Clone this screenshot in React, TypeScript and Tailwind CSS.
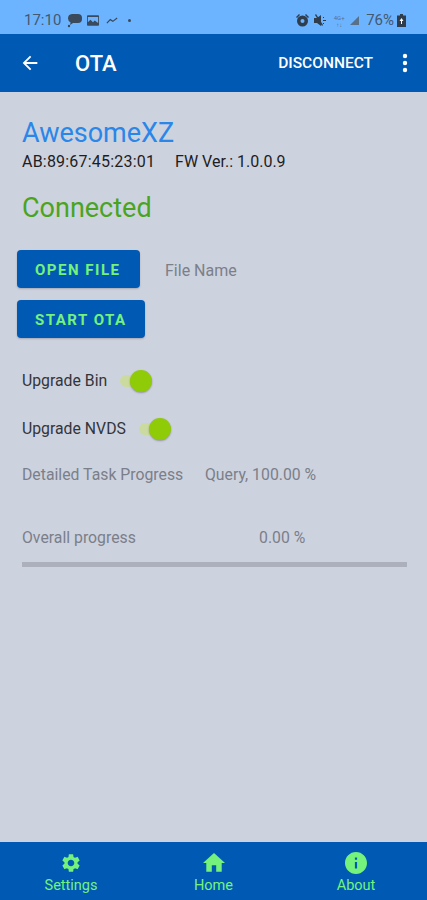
import React from 'react';

const font = 'font-[Roboto,sans-serif]';

function Toggle() {
  return (
    <div className="relative h-[12px] w-[32px] rounded-full bg-[#cbdb9f]">
      <div className="absolute right-0 top-[-5px] h-[22px] w-[22px] rounded-full bg-[#8fcb06] shadow-[0_1px_2px_rgba(0,0,0,0.3)]" />
    </div>
  );
}

function StatusBar() {
  return (
    <div className="flex h-[34px] items-center justify-between bg-[#6cb4ff] pl-6 pr-[21px] pt-[7px] text-[#44586f]">
      <div className="flex items-center">
        <span className="text-[15px] leading-none">17:10</span>
        <svg width="16" height="16" viewBox="0 0 16 16" className="ml-[5px]" fill="#3a4a5c">
          <path d="M6 1h6a4 4 0 0 1 4 4v1a4 4 0 0 1-4 4H7l-3 2 .6-2.6A4.5 4.5 0 0 1 2 5.500 4.500 4.500 0 0 1 6 1z" />
          <circle cx="3" cy="13" r="1.200" />
        </svg>
        <svg width="12" height="11" viewBox="0 0 14 12" className="ml-[5px]" fill="#3a4a5c">
          <path d="M1 0h12a1 1 0 0 1 1 1v10a1 1 0 0 1-1 1H1a1 1 0 0 1-1-1V1a1 1 0 0 1 1-1zm0 2v6l3-3 3 3 2-2 4 3V2z" />
        </svg>
        <svg width="12" height="9" viewBox="0 0 14 10" className="ml-[7px]" fill="none" stroke="#3a4a5c" strokeWidth="1.400">
          <path d="M1 8l4-4 3 2 5-4" />
        </svg>
        <div className="ml-[10px] h-[3px] w-[3px] rounded-full bg-[#3a4a5c]" />
      </div>
      <div className="flex items-center">
        <svg width="13" height="13" viewBox="0 0 13 13" fill="#2f3d4d">
          <circle cx="6.500" cy="7" r="5.500" />
          <path d="M0 3l3-3 1 1-3 3zM13 3l-3-3-1 1 3 3z" />
          <circle cx="6.500" cy="7" r="2" fill="#6cb4ff" />
        </svg>
        <svg width="13" height="13" viewBox="0 0 13 13" className="ml-[5px]" fill="#2f3d4d">
          <path d="M0 4h3l4-3v11L3 9H0zM9 3h1v1H9zM9 6h3v1H9zM9 9h1v1H9z" />
          <path d="M1 1l1-1 7 11-1 1z" />
        </svg>
        <span className="ml-[6px] w-[12px] text-center text-[6px] leading-[7px] text-[#5a7089]">4G+<br />↑↓</span>
        <svg width="9" height="9" viewBox="0 0 9 9" className="ml-[5px]" fill="#5a7089">
          <path d="M9 0v9H0z" />
        </svg>
        <span className="ml-[7px] text-[15px] leading-none">76%</span>
        <svg width="9" height="13" viewBox="0 0 9 13" className="ml-[3px]" fill="#2f3d4d">
          <path d="M3 0h3v1.500h3V13H0V1.500h3z" />
          <path d="M4.500 4l2 3H5v3H4V7H2.500z" fill="#fff" />
        </svg>
      </div>
    </div>
  );
}

function AppBar() {
  return (
    <div className="flex h-[58px] items-center bg-[#005ab4] text-white">
      <svg width="22" height="22" viewBox="0 0 24 24" className="ml-[19px]" fill="#fff">
        <path d="M20 11H7.830l5.590-5.590L12 4l-8 8 8 8 1.410-1.410L7.830 13H20z" />
      </svg>
      <span className="ml-[34px] pt-[1px] text-[22px] font-medium">OTA</span>
      <span className="ml-auto pt-[2px] text-[15.500px] font-medium">DISCONNECT</span>
      <svg width="6" height="20" viewBox="0 0 6 20" className="ml-[29px] mr-[19px]" fill="#fff">
        <circle cx="3" cy="3" r="2.200" />
        <circle cx="3" cy="10" r="2.200" />
        <circle cx="3" cy="17" r="2.200" />
      </svg>
    </div>
  );
}

function ActionButton({ label, width }: { label: string; width: string }) {
  return (
    <button className={`flex h-[38px] items-center rounded-[4px] bg-[#005ab4] pl-[18px] pt-[2px] text-[15px] font-bold tracking-[1.5px] text-[#74f27c] shadow-[0_1px_2px_rgba(0,0,0,0.2)] ${width}`}>
      {label}
    </button>
  );
}

function NavItem({ label, children }: { label: string; children: React.ReactNode }) {
  return (
    <div className="flex w-[142px] flex-col items-center pt-[2px]">
      {children}
      <span className="mt-[4px] text-[14.500px] leading-[16px] text-[#74f27c]">{label}</span>
    </div>
  );
}

export default function App() {
  return (
    <div className={`${font} flex h-[900px] w-[427px] flex-col overflow-hidden bg-[#cdd2df]`}>
      <StatusBar />
      <AppBar />

      <div className="flex-1 pl-[22px] pr-5">
        <p className="mt-[26px] text-[27px] leading-[30px] text-[#2a86e8]">AwesomeXZ</p>
        <div className="mt-[5px] flex text-[16px] leading-[17px] text-[#1d1d22]">
          <span className="tracking-[0.2px]">AB:89:67:45:23:01</span>
          <span className="ml-[20px]">FW Ver.: 1.0.0.9</span>
        </div>
        <p className="mt-[22px] text-[27px] leading-[32px] text-[#4aa41e]">Connected</p>

        <div className="ml-[-5px] mt-[26px] flex items-center">
          <ActionButton label="OPEN FILE" width="w-[123px]" />
          <span className="ml-[25px] pt-[3px] text-[16px] text-[#7b7f89]">File Name</span>
        </div>
        <div className="ml-[-5px] mt-[12px]">
          <ActionButton label="START OTA" width="w-[128px]" />
        </div>

        <div className="mt-[33px] flex items-center text-[15.800px] leading-[20px] text-[#33353b]">
          <span>Upgrade Bin</span>
          <div className="ml-[13px]"><Toggle /></div>
        </div>
        <div className="mt-[28px] flex items-center text-[15.800px] leading-[20px] text-[#33353b]">
          <span>Upgrade NVDS</span>
          <div className="ml-[13px]"><Toggle /></div>
        </div>

        <div className="mt-[26px] flex text-[15.800px] leading-[20px] text-[#7b7f89]">
          <span className="w-[183px]">Detailed Task Progress</span>
          <span>Query, 100.00 %</span>
        </div>
        <div className="mt-[43px] flex text-[15.800px] leading-[20px] text-[#7b7f89]">
          <span className="w-[237px]">Overall progress</span>
          <span>0.00 %</span>
        </div>
        <div className="mt-[14px] h-[5px] w-[385px] bg-[#abb0bc]" />
      </div>

      <div className="flex h-[58px] items-center justify-between bg-[#005ab4] pt-[1px]">
        <NavItem label="Settings">
          <svg width="22" height="22" viewBox="0 0 24 24" fill="#74f27c">
            <path d="M19.140 12.940c.04-.3.060-.61.060-.94 0-.32-.020-.64-.070-.94l2.030-1.580a.49.49 0 0 0 .12-.61l-1.920-3.320a.488.488 0 0 0-.59-.22l-2.390.96c-.5-.38-1.030-.7-1.620-.94l-.36-2.540a.484.484 0 0 0-.48-.41h-3.840c-.24 0-.43.17-.47.41l-.36 2.540c-.59.24-1.130.57-1.620.94l-2.390-.96c-.22-.08-.47 0-.59.22L2.740 8.870c-.12.21-.08.47.12.61l2.030 1.580c-.05.3-.090.63-.090.94s.020.64.070.94l-2.030 1.580a.49.49 0 0 0-.12.61l1.920 3.320c.12.22.37.29.59.22l2.390-.96c.5.38 1.030.7 1.620.94l.36 2.540c.05.24.24.41.48.41h3.840c.24 0 .44-.17.47-.41l.36-2.540c.59-.24 1.130-.56 1.620-.94l2.390.96c.22.08.47 0 .59-.22l1.920-3.320c.12-.22.070-.47-.12-.61l-2.010-1.580zM12 15.600c-1.980 0-3.600-1.620-3.600-3.600s1.620-3.600 3.600-3.600 3.600 1.620 3.600 3.600-1.620 3.600-3.600 3.600z" />
          </svg>
        </NavItem>
        <NavItem label="Home">
          <svg width="22" height="20" viewBox="2 3 20 18" className="my-[1px]" fill="#74f27c">
            <path d="M10 20v-6h4v6h5v-8h3L12 3 2 12h3v8z" />
          </svg>
        </NavItem>
        <NavItem label="About">
          <svg width="22" height="22" viewBox="2 2 20 20" fill="#74f27c">
            <path d="M12 2C6.480 2 2 6.480 2 12s4.480 10 10 10 10-4.480 10-10S17.520 2 12 2zm1 15h-2v-6h2v6zm0-8h-2V7h2v2z" />
          </svg>
        </NavItem>
      </div>
    </div>
  );
}
